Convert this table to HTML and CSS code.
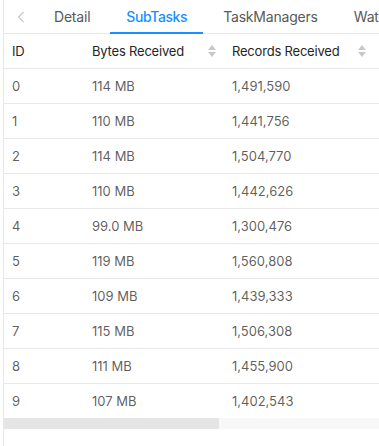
FILE: index.html
```html
<!DOCTYPE html>
<html lang="en">
<head>
    <meta charset="UTF-8">
    <title>SubTasks</title>
    <link rel="stylesheet" href="styles.css">
</head>
<body>
    <div class="panel">
        <div class="tabs">
            <div class="tab-prev">
                <svg width="8" height="12" viewBox="0 0 8 12"><path d="M6.5 1 L1.5 6 L6.5 11" fill="none" stroke="#c4c4c4" stroke-width="1.1"/></svg>
            </div>
            <div class="tab">Detail</div>
            <div class="tab active">SubTasks</div>
            <div class="tab">TaskManagers</div>
            <div class="tab">Watermarks</div>
        </div>

        <div class="table">
            <div class="row head">
                <div class="cell col-id">ID</div>
                <div class="cell col-bytes">Bytes Received <span class="sorter"></span></div>
                <div class="cell col-records">Records Received <span class="sorter"></span></div>
                <div class="cell col-more">Bytes Sent</div>
            </div>
            <div class="row"><div class="cell col-id">0</div><div class="cell col-bytes">114 MB</div><div class="cell col-records">1,491,590</div><div class="cell col-more"></div></div>
            <div class="row"><div class="cell col-id">1</div><div class="cell col-bytes">110 MB</div><div class="cell col-records">1,441,756</div><div class="cell col-more"></div></div>
            <div class="row"><div class="cell col-id">2</div><div class="cell col-bytes">114 MB</div><div class="cell col-records">1,504,770</div><div class="cell col-more"></div></div>
            <div class="row"><div class="cell col-id">3</div><div class="cell col-bytes">110 MB</div><div class="cell col-records">1,442,626</div><div class="cell col-more"></div></div>
            <div class="row"><div class="cell col-id">4</div><div class="cell col-bytes">99.0 MB</div><div class="cell col-records">1,300,476</div><div class="cell col-more"></div></div>
            <div class="row"><div class="cell col-id">5</div><div class="cell col-bytes">119 MB</div><div class="cell col-records">1,560,808</div><div class="cell col-more"></div></div>
            <div class="row"><div class="cell col-id">6</div><div class="cell col-bytes">109 MB</div><div class="cell col-records">1,439,333</div><div class="cell col-more"></div></div>
            <div class="row"><div class="cell col-id">7</div><div class="cell col-bytes">115 MB</div><div class="cell col-records">1,506,308</div><div class="cell col-more"></div></div>
            <div class="row"><div class="cell col-id">8</div><div class="cell col-bytes">111 MB</div><div class="cell col-records">1,455,900</div><div class="cell col-more"></div></div>
            <div class="row last"><div class="cell col-id">9</div><div class="cell col-bytes">107 MB</div><div class="cell col-records">1,402,543</div><div class="cell col-more"></div></div>
        </div>

        <div class="scrollbar"><div class="thumb"></div></div>
    </div>
</body>
</html>
```

FILE: styles.css
```css
body {
    margin: 0;
    background: #ffffff;
    font-family: Inter, 'Noto Sans', sans-serif;
    color: rgba(0, 0, 0, 0.65);
    overflow: hidden;
}

.panel {
    margin-left: 3px;
    border-left: 1px solid #e8e8e8;
    height: 446px;
    overflow: hidden;
}

/* tab bar */
.tabs {
    display: flex;
    align-items: center;
    height: 33px;
    border-bottom: 1px solid #e8e8e8;
    white-space: nowrap;
    font-size: 14px;
}

.tab-prev {
    width: 34px;
    flex: none;
    display: flex;
    justify-content: center;
    padding-top: 1px;
}

.tab {
    position: relative;
    flex: none;
    height: 33px;
    line-height: 33px;
    padding: 0 16px;
    margin-right: 4px;
    color: #595959;
    letter-spacing: -0.2px;
}

.tab.active {
    color: #1890ff;
    font-weight: 500;
    letter-spacing: -0.4px;
}

.tab.active::after {
    content: "";
    position: absolute;
    left: 0;
    right: 0;
    bottom: -1px;
    height: 2px;
    background: #1890ff;
}

/* table */
.table {
    font-size: 13px;
}

.row {
    display: flex;
    height: 34px;
    border-bottom: 1px solid #e8e8e8;
    white-space: nowrap;
}

.row.last {
    border-bottom: none;
}

.row.head {
    color: #262626;
    letter-spacing: -0.2px;
}

.cell {
    flex: none;
    display: flex;
    align-items: center;
    padding: 0 8px;
    box-sizing: border-box;
}

.col-id { width: 80px; }
.col-bytes { width: 140px; }
.col-records { width: 150px; }
.col-more { width: 280px; }

.head .col-bytes,
.head .col-records {
    justify-content: space-between;
}

.sorter {
    display: flex;
    flex-direction: column;
    align-items: center;
    gap: 2px;
}

.sorter::before,
.sorter::after {
    content: "";
    width: 0;
    height: 0;
    border-left: 4px solid transparent;
    border-right: 4px solid transparent;
}

.sorter::before {
    border-bottom: 5px solid #c8c8c8;
}

.sorter::after {
    border-top: 5px solid #c8c8c8;
}

.scrollbar {
    height: 11px;
    background: #f8f8f8;
}

.thumb {
    width: 215px;
    height: 100%;
    background: #e5e5e5;
}
```
